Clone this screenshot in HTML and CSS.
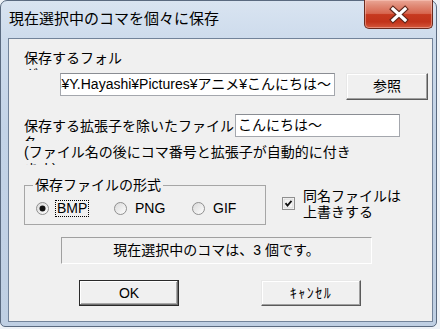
FILE: index.html
```html
<!DOCTYPE html>
<html lang="ja">
<head>
<meta charset="utf-8">
<title>現在選択中のコマを個々に保存</title>
<link rel="stylesheet" href="styles.css">
</head>
<body>
<div class="window">
  <div class="titlebar">
    <div class="title">現在選択中のコマを個々に保存</div>
    <div class="close">
      <svg width="20" height="19" viewBox="0 0 20 19">
        <path d="M4 4 L16 15 M16 4 L4 15" stroke="#5a2419" stroke-width="5.4" stroke-linecap="square" fill="none"/>
        <path d="M4 4 L16 15 M16 4 L4 15" stroke="#ffffff" stroke-width="3.2" stroke-linecap="square" fill="none"/>
      </svg>
    </div>
  </div>
  <div class="client">
    <div class="lbl1">保存するフォルダ</div>
    <div class="row1">
      <div class="input path-input"><span>C:¥Users¥Y.Hayashi¥Pictures¥アニメ¥こんにちは～</span></div>
      <div class="btn btn-browse">参照</div>
    </div>
    <div class="row2">
      <div class="lbl2">保存する拡張子を除いたファイル名</div>
      <div class="input name-input"><span>こんにちは～</span></div>
    </div>
    <div class="note">(ファイル名の後にコマ番号と拡張子が自動的に付きます)</div>
    <div class="row4">
      <fieldset class="group">
        <legend>保存ファイルの形式</legend>
        <div class="radios">
          <div class="radio">
            <svg width="13" height="13" viewBox="0 0 13 13">
              <defs>
                <linearGradient id="rg" x1="0" y1="0" x2="1" y2="1">
                  <stop offset="0" stop-color="#d8d8d8"/>
                  <stop offset="1" stop-color="#ffffff"/>
                </linearGradient>
              </defs>
              <circle cx="6.5" cy="6.5" r="6" fill="url(#rg)" stroke="#8f8f8f" stroke-width="1"/>
              <circle cx="6.5" cy="6.5" r="3" fill="#111"/>
            </svg>
            <span class="rlabel focus">BMP</span>
          </div>
          <div class="radio">
            <svg width="13" height="13" viewBox="0 0 13 13">
              <circle cx="6.5" cy="6.5" r="6" fill="url(#rg)" stroke="#8f8f8f" stroke-width="1"/>
            </svg>
            <span class="rlabel">PNG</span>
          </div>
          <div class="radio">
            <svg width="13" height="13" viewBox="0 0 13 13">
              <circle cx="6.5" cy="6.5" r="6" fill="url(#rg)" stroke="#8f8f8f" stroke-width="1"/>
            </svg>
            <span class="rlabel">GIF</span>
          </div>
        </div>
      </fieldset>
      <div class="check">
        <svg class="cbox" width="13" height="13" viewBox="0 0 13 13">
          <rect x="0.5" y="0.5" width="12" height="12" fill="#ffffff" stroke="#8f8f8f"/>
          <rect x="2" y="2" width="9" height="9" fill="#f4f4f4" stroke="#d0d0d0" stroke-width="0.8"/>
          <path d="M3.5 6.2 L5.5 8.5 L9.5 3.8" stroke="#111" stroke-width="1.8" fill="none"/>
        </svg>
        <div class="clabel">同名ファイルは<br>上書きする</div>
      </div>
    </div>
    <div class="status">現在選択中のコマは、3 個です。</div>
    <div class="buttons">
      <div class="btn btn-ok">OK</div>
      <div class="btn btn-cancel">ｷｬﾝｾﾙ</div>
    </div>
  </div>
</div>
</body>
</html>
```
FILE: styles.css
```css
html, body {
  margin: 0;
  padding: 0;
}
body {
  background: #eef2f7;
  font-family: "Liberation Sans", "Noto Sans CJK JP", sans-serif;
  font-size: 14px;
  color: #000;
}
.window {
  width: 437px;
  height: 327px;
  box-sizing: border-box;
  border: 1px solid #5a6a80;
  border-radius: 7px 7px 5px 5px;
  background: linear-gradient(180deg, #d9e4f1 0%, #cddbec 12%, #c3d3e7 40%, #bfcfe3 100%);
  display: flex;
  flex-direction: column;
}
.titlebar {
  height: 37px;
  display: flex;
  align-items: flex-start;
  flex: none;
}
.title {
  margin: 9px 0 0 8px;
  font-size: 15px;
  line-height: 18px;
  color: #000;
}
.close {
  margin: -1px 3px 0 auto;
  width: 69px;
  height: 29px;
  box-sizing: border-box;
  border: 1px solid #6a2a1e;
  border-top: none;
  border-radius: 0 0 5px 5px;
  background: linear-gradient(180deg, #eaa797 0%, #e08a76 20%, #d7664f 48%, #c6391f 52%, #c2331a 78%, #d4583c 100%);
  box-shadow: inset 0 0 0 1px rgba(255, 210, 200, 0.45);
  display: flex;
  align-items: center;
  justify-content: center;
}
.client {
  flex: 1;
  margin: 0 3px 4px 7px;
  border: 1px solid #72839a;
  background: #f0f0f0;
  padding: 11px 0 0 15px;
  box-sizing: border-box;
}
.lbl1 {
  width: 100px;
  height: 20px;
  overflow: hidden;
  line-height: 17px;
}
.row1 {
  display: flex;
  align-items: flex-start;
  margin: 3px 0 0 36px;
}
.input {
  box-sizing: border-box;
  height: 23px;
  background: #fff;
  border: 1px solid #a4a7ad;
  border-top-color: #8a8d93;
  display: flex;
  align-items: center;
  overflow: hidden;
  white-space: nowrap;
  line-height: 21px;
}
.path-input {
  width: 275px;
  justify-content: flex-end;
  padding-right: 3px;
}
.path-input span {
  flex: none;
}
.name-input {
  width: 165px;
  padding-left: 2px;
}
.btn {
  box-sizing: border-box;
  background: #f0f0f0;
  border: 1px solid;
  border-color: #e8e8e8 #5a5a5a #5a5a5a #e8e8e8;
  box-shadow: inset -1px -1px 0 #a0a0a0, inset 1px 1px 0 #ffffff;
  display: flex;
  align-items: center;
  justify-content: center;
  font-size: 14px;
  line-height: 17px;
}
.btn-browse {
  margin-left: 11px;
  width: 82px;
  height: 27px;
}
.row2 {
  display: flex;
  align-items: flex-start;
  margin-top: 14px;
}
.lbl2 {
  width: 211px;
  height: 23px;
  margin-top: 4px;
  overflow: hidden;
  line-height: 17px;
}
.note {
  margin-top: 3px;
  width: 340px;
  height: 21px;
  overflow: hidden;
  line-height: 17px;
}
.row4 {
  display: flex;
  align-items: flex-start;
  margin-top: 12px;
}
.group {
  margin: 0;
  width: 242px;
  box-sizing: border-box;
  border: 1px solid #a6a6a6;
  padding: 6px 0 7px 11px;
  min-inline-size: 0;
}
.group legend {
  padding: 0 2px;
  margin-left: -3px;
  line-height: 17px;
  font-size: 14px;
}
.radios {
  display: flex;
  height: 17px;
  align-items: center;
}
.radio {
  width: 78px;
  display: flex;
  align-items: center;
  flex: none;
}
.radio svg {
  flex: none;
}
.rlabel {
  margin-left: 7px;
  padding: 0 1px;
  line-height: 15px;
  outline: 1px dotted transparent;
}
.rlabel.focus {
  outline: 1px dotted #000;
}
.check {
  display: flex;
  align-items: flex-start;
  margin: 11px 0 0 16px;
}
.cbox {
  flex: none;
  margin-top: 9px;
}
.clabel {
  margin-left: 8px;
  line-height: 16px;
}
.status {
  margin: 12px 0 0 37px;
  width: 311px;
  height: 27px;
  box-sizing: border-box;
  border: 1px solid;
  border-color: #a0a0a0 #ffffff #ffffff #a0a0a0;
  display: flex;
  align-items: center;
  justify-content: center;
  line-height: 17px;
}
.buttons {
  display: flex;
  margin: 16px 0 0 55px;
  gap: 82px;
}
.btn-ok, .btn-cancel {
  width: 100px;
  height: 26px;
}
.btn-ok {
  border-color: #2a2a2a;
  box-shadow: inset -1px -1px 0 #707070, inset 1px 1px 0 #ffffff, inset -2px -2px 0 #a8a8a8;
}
.btn-cancel {
  letter-spacing: 1.5px;
}
```
